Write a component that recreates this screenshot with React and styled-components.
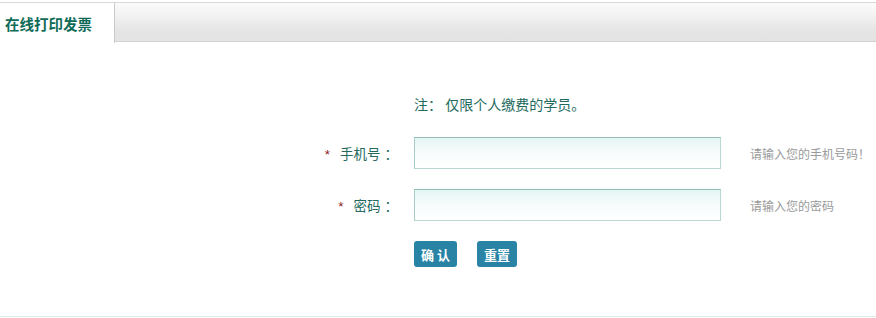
import React from "react";
import styled, { createGlobalStyle } from "styled-components";

const GlobalStyle = createGlobalStyle`
  html, body {
    margin: 0;
    padding: 0;
    background: #fff;
  }
  body {
    font-family: "Noto Sans CJK SC", "Liberation Sans", sans-serif;
  }
`;

const Page = styled.div`
  width: 876px;
  padding-top: 2px;
`;

const TabBar = styled.div`
  display: flex;
  height: 39px;
  border-top: 1px solid #d8d8d8;
  background: linear-gradient(#fbfbfb 0%, #f1f1f1 35%, #e5e5e5 70%, #e3e3e3 100%);
`;

const Tab = styled.div`
  display: flex;
  align-items: center;
  width: 109px;
  height: 40px;
  padding-left: 5px;
  background: #fff;
  border-right: 1px solid #c9c9c9;
  font-size: 14.5px;
  font-weight: bold;
  color: #0f6b58;
  white-space: nowrap;
`;

const TabRest = styled.div`
  flex: 1;
  border-bottom: 1px solid #d2d2d2;
`;

const Main = styled.div`
  height: 275px;
  padding-top: 52px;
  box-sizing: border-box;
  border-bottom: 1px solid #e3eeec;
  box-shadow: 0 1px 0 #c8c8c8;
`;

const Form = styled.div`
  display: grid;
  grid-template-columns: 390px 307px 1fr;
  column-gap: 24px;
  align-items: center;
`;

const Note = styled.div`
  grid-column: 2 / 4;
  height: 20px;
  line-height: 20px;
  font-size: 14px;
  color: #236a5e;
  margin-bottom: 23px;
`;

const Label = styled.div`
  grid-column: 1;
  text-align: right;
  font-size: 13.5px;
  color: #236a5e;
  margin-bottom: ${(p) => p.$mb || 0}px;
  white-space: nowrap;
`;

const Star = styled.span`
  font-family: "Liberation Sans", sans-serif;
  color: #8e1c1c;
  margin-right: 10px;
`;

const Colon = styled.span`
  margin-left: 4px;
  margin-right: -8px;
`;

const Input = styled.input`
  grid-column: 2;
  width: 307px;
  height: 32px;
  box-sizing: border-box;
  border: 1px solid #bad7d3;
  border-top-color: #93bcb6;
  border-left-color: #a7cbc6;
  background: linear-gradient(#e4f5f4 0%, #f6fbfb 45%, #ffffff 100%);
  margin-bottom: ${(p) => p.$mb || 0}px;
  outline: none;
  padding: 0 6px;
`;

const Hint = styled.div`
  grid-column: 3;
  margin-left: 5px;
  font-size: 12px;
  color: #9a9a9a;
  margin-bottom: ${(p) => p.$mb || 0}px;
  white-space: nowrap;
`;

const Buttons = styled.div`
  grid-column: 2;
  display: flex;
  gap: 20px;
`;

const Button = styled.button`
  height: 26px;
  padding: 0 7px;
  border: none;
  border-radius: 3px;
  background: #2883a4;
  color: #fff;
  font-family: "Noto Sans CJK SC", "Liberation Sans", sans-serif;
  font-size: 13px;
  font-weight: bold;
  cursor: pointer;
`;

export default function App() {
  return (
    <Page>
      <GlobalStyle />
      <TabBar>
        <Tab>在线打印发票</Tab>
        <TabRest />
      </TabBar>
      <Main>
        <Form>
          <Note>注： 仅限个人缴费的学员。</Note>

          <Label $mb={20}>
            <Star>*</Star>手机号<Colon>：</Colon>
          </Label>
          <Input type="text" $mb={20} />
          <Hint $mb={20}>请输入您的手机号码！</Hint>

          <Label $mb={20}>
            <Star>*</Star>密码<Colon>：</Colon>
          </Label>
          <Input type="password" $mb={20} />
          <Hint $mb={20}>请输入您的密码</Hint>

          <Buttons>
            <Button>确 认</Button>
            <Button>重置</Button>
          </Buttons>
        </Form>
      </Main>
    </Page>
  );
}
